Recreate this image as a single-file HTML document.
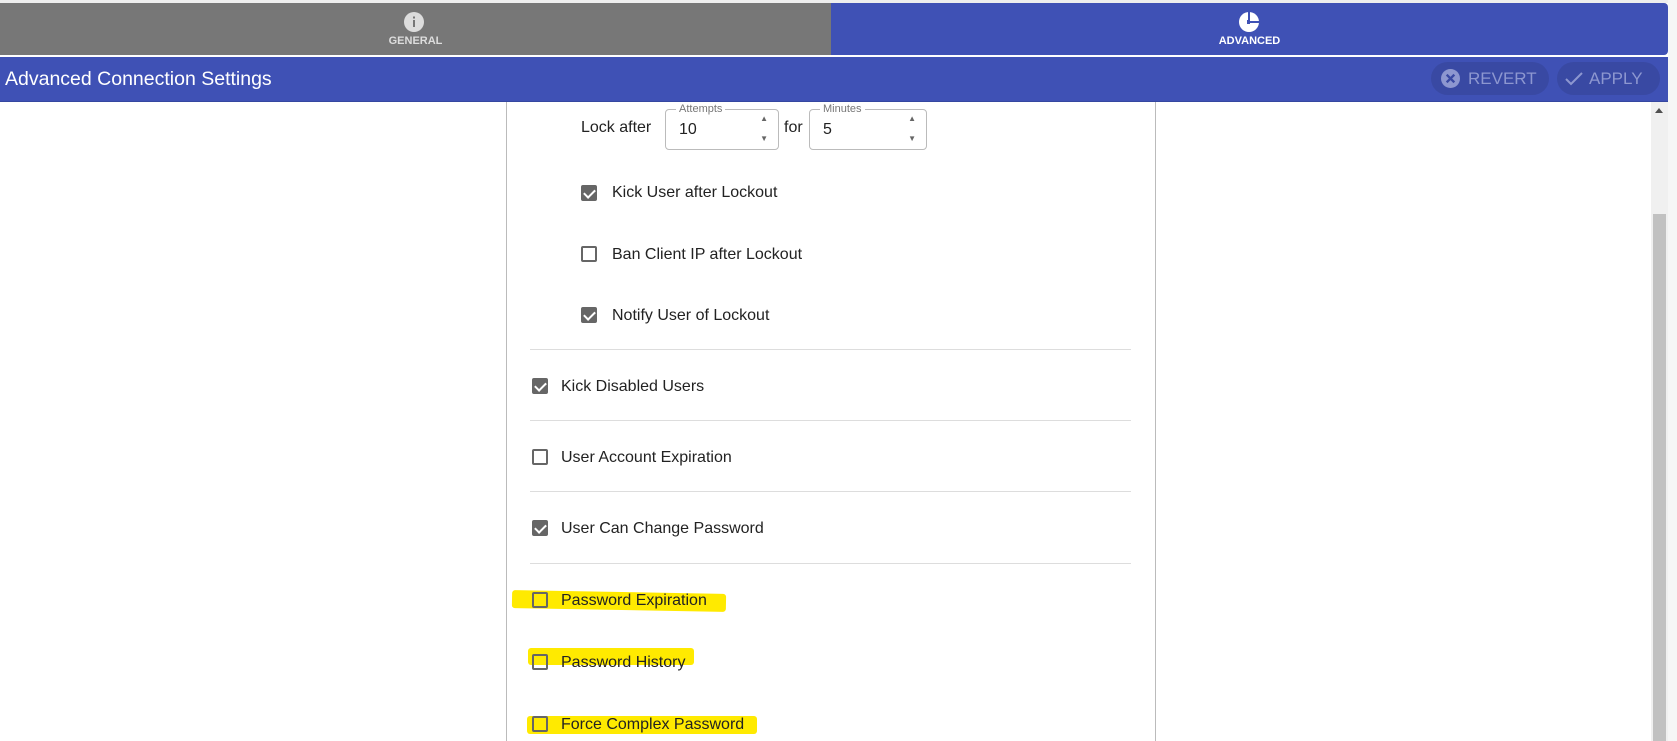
<!DOCTYPE html>
<html><head><style>
*{margin:0;padding:0;box-sizing:border-box}
body{width:1677px;height:741px;overflow:hidden;background:#fff;font-family:"Liberation Sans",Arial,sans-serif;position:relative;color:#222}
.a{position:absolute}
.tabtxt{font-size:11px;font-weight:bold;text-align:center;width:100%;top:32px}
.cb{position:absolute;width:16px;height:16px;border:2px solid #666;border-radius:2px;background:transparent}
.cb.on{background:#666}
.cb.on::after{content:"";position:absolute;left:3px;top:0px;width:5px;height:9px;border:solid #fff;border-width:0 2px 2px 0;transform:rotate(45deg)}
.lbl{position:absolute;font-size:16px;color:#222}
.div{position:absolute;left:530px;width:601px;height:1px;background:#ddd}
.hl{position:absolute;background:#ffea00;border-radius:3px}
.box{position:absolute;border:1px solid #bbb;border-radius:4px;height:41px}
.leg{position:absolute;top:-7px;background:#fff;font-size:11px;color:#777;padding:0 3px;line-height:12px}
.val{position:absolute;left:13px;top:11px;font-size:16px}
.sp{position:absolute;right:10px;font-size:8px;color:#666}
</style></head><body>
<div class="a" style="left:0;top:0;width:1677px;height:3px;background:#eee"></div>
<div class="a" style="left:0;top:3px;width:831px;height:52px;background:#777;color:#ddd">
 <svg class="a" style="left:404px;top:9px" width="20" height="20" viewBox="0 0 20 20"><circle cx="10" cy="10" r="10" fill="#ddd"/><rect x="9" y="8" width="2" height="7" fill="#777"/><rect x="9" y="4.5" width="2" height="2" fill="#777"/></svg>
 <div class="a tabtxt">GENERAL</div>
</div>
<div class="a" style="left:831px;top:3px;width:837px;height:52px;background:#3f51b5;color:#fff;border-radius:0 4px 4px 0">
 <svg class="a" style="left:408px;top:9px" width="20" height="20" viewBox="0 0 20 20"><circle cx="10" cy="10" r="10" fill="#fff"/><rect x="9" y="0" width="2" height="8" fill="#3f51b5"/><rect x="11" y="9" width="9" height="2" fill="#3f51b5"/><rect x="8" y="8" width="3" height="4" fill="#3f51b5"/></svg>
 <div class="a tabtxt">ADVANCED</div>
</div>
<div class="a" style="left:0;top:57px;width:1668px;height:45px;background:#3f51b5;color:#fff;border-bottom:1px solid #3547a0">
 <div class="a" style="left:5px;top:11px;font-size:19.5px">Advanced Connection Settings</div>
 <div class="a" style="left:1431px;top:5px;width:118px;height:33px;border-radius:17px;background:#3949a3;color:#8d97d0;font-size:17px">
  <svg class="a" style="left:10px;top:7px" width="19" height="19" viewBox="0 0 20 20"><circle cx="10" cy="10" r="10" fill="#8d97d0"/><path d="M6 6L14 14M14 6L6 14" stroke="#3949a3" stroke-width="2.5"/></svg>
  <span class="a" style="left:37px;top:7px">REVERT</span></div>
 <div class="a" style="left:1557px;top:5px;width:103px;height:33px;border-radius:17px;background:#3949a3;color:#8d97d0;font-size:17px">
  <svg class="a" style="left:8px;top:9px" width="18" height="16" viewBox="0 0 18 16"><path d="M1 8L6 13L17 2" stroke="#8d97d0" stroke-width="2" fill="none"/></svg>
  <span class="a" style="left:32px;top:7px">APPLY</span></div>
</div>
<div class="a" style="left:506px;top:102px;width:1px;height:639px;background:#bbb"></div>
<div class="a" style="left:1155px;top:102px;width:1px;height:639px;background:#bbb"></div>
<div class="a" style="left:1651px;top:102px;width:17px;height:639px;background:#f0f0f0"></div>
<div class="a" style="left:1653px;top:214px;width:13px;height:527px;background:#c1c1c1"></div>
<div class="a" style="left:1655px;top:108px;width:0;height:0;border-left:4px solid transparent;border-right:4px solid transparent;border-bottom:5px solid #505050"></div>
<div class="a" style="left:1668px;top:0;width:9px;height:741px;background:#f6f6f6"></div>

<div class="lbl" style="left:581px;top:119px">Lock after</div>
<div class="box" style="left:665px;top:109px;width:114px"><span class="leg" style="left:10px">Attempts</span><span class="val">10</span><span class="sp" style="top:4px">▲</span><span class="sp" style="top:24px">▼</span></div>
<div class="lbl" style="left:784px;top:119px">for</div>
<div class="box" style="left:809px;top:109px;width:118px"><span class="leg" style="left:10px">Minutes</span><span class="val">5</span><span class="sp" style="top:4px">▲</span><span class="sp" style="top:24px">▼</span></div>

<div class="cb on" style="left:581px;top:185px"></div><div class="lbl" style="left:612px;top:184px">Kick User after Lockout</div>
<div class="cb" style="left:581px;top:246px"></div><div class="lbl" style="left:612px;top:246px">Ban Client IP after Lockout</div>
<div class="cb on" style="left:581px;top:307px"></div><div class="lbl" style="left:612px;top:307px">Notify User of Lockout</div>
<div class="div" style="top:349px"></div>
<div class="cb on" style="left:532px;top:378px"></div><div class="lbl" style="left:561px;top:378px">Kick Disabled Users</div>
<div class="div" style="top:420px"></div>
<div class="cb" style="left:532px;top:449px"></div><div class="lbl" style="left:561px;top:449px">User Account Expiration</div>
<div class="div" style="top:491px"></div>
<div class="cb on" style="left:532px;top:520px"></div><div class="lbl" style="left:561px;top:520px">User Can Change Password</div>
<div class="div" style="top:563px"></div>

<div class="hl" style="left:512px;top:592px;width:214px;height:18px;transform:rotate(1deg)"></div>
<div class="hl" style="left:528px;top:648px;width:166px;height:17px"></div>
<div class="hl" style="left:527px;top:716px;width:230px;height:18px"></div>
<div class="cb" style="left:532px;top:592px"></div><div class="lbl" style="left:561px;top:592px">Password Expiration</div>
<div class="cb" style="left:532px;top:654px"></div><div class="lbl" style="left:561px;top:654px">Password History</div>
<div class="cb" style="left:532px;top:716px"></div><div class="lbl" style="left:561px;top:716px">Force Complex Password</div>
</body></html>
